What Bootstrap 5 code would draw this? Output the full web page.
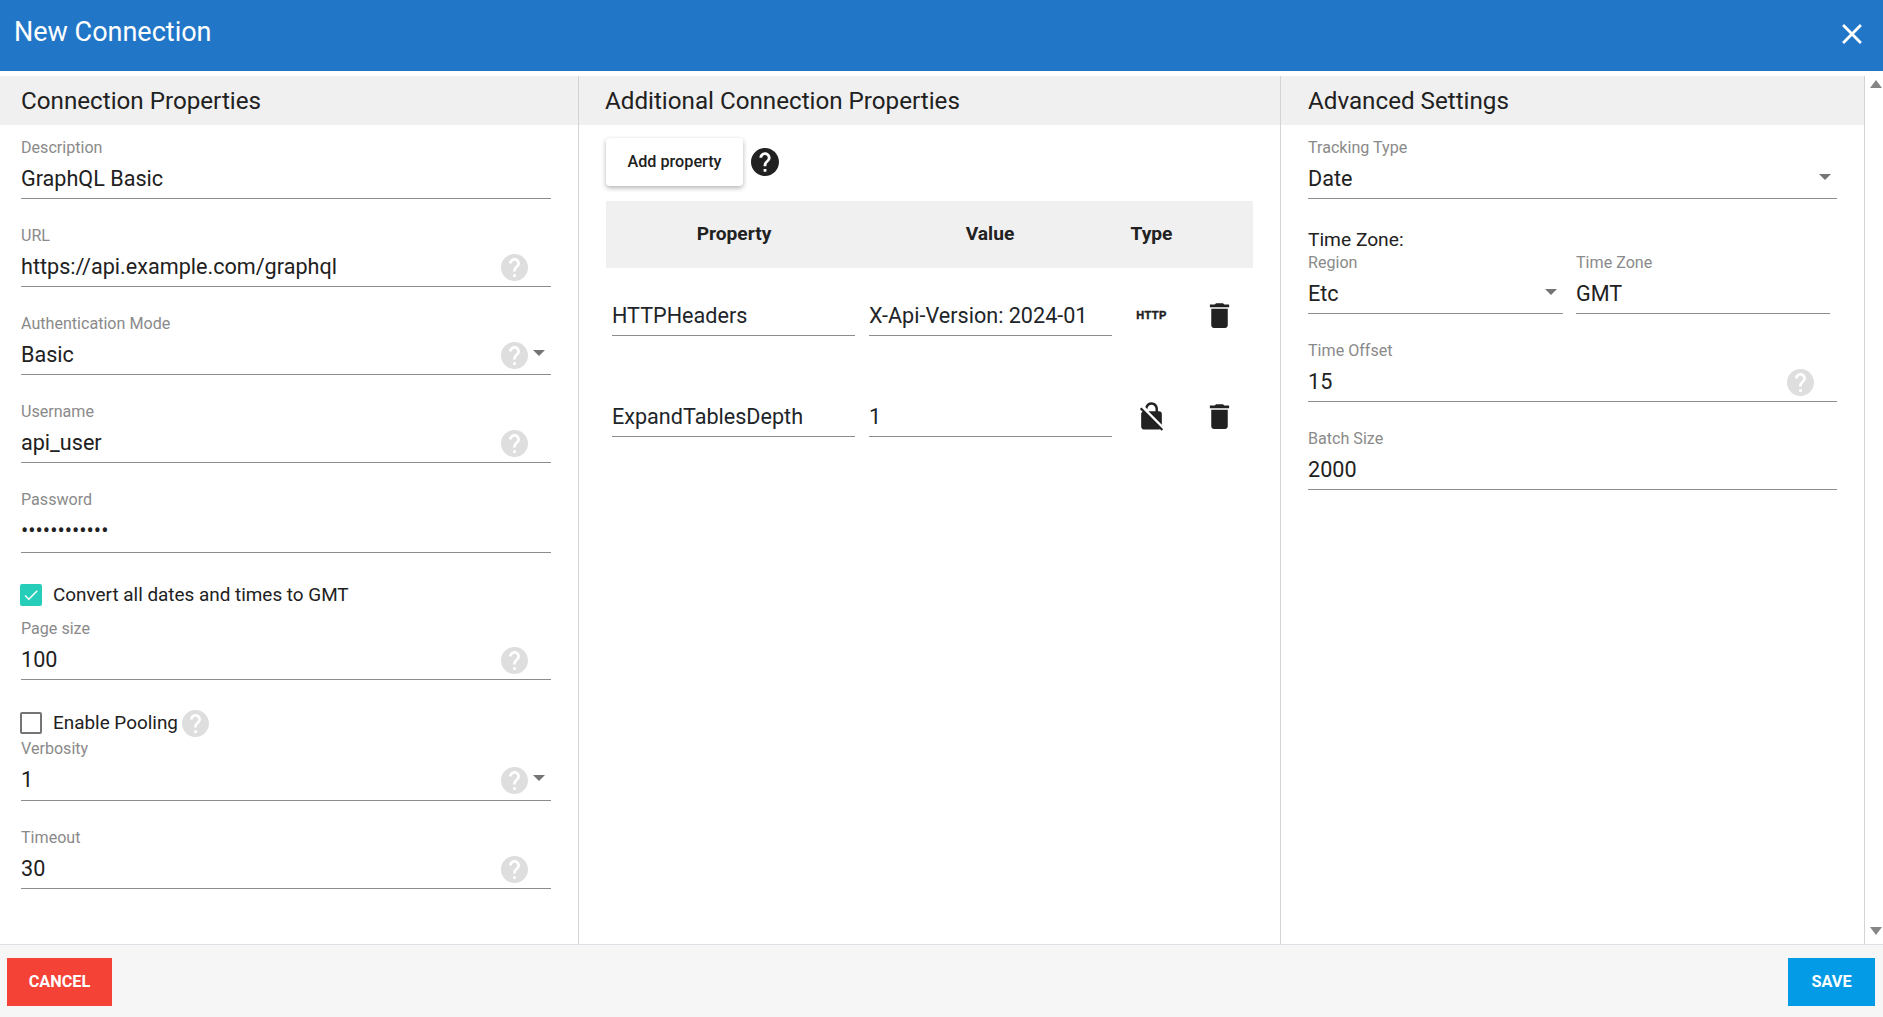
<!DOCTYPE html>
<html lang="en">
<head>
<meta charset="utf-8">
<title>New Connection</title>
<link href="https://cdn.jsdelivr.net/npm/bootstrap@5.3.0/dist/css/bootstrap.min.css" rel="stylesheet">
<style>
html,body{height:100%;overflow:hidden}
body{font-family:Roboto,"Liberation Sans",sans-serif;color:#212121;background:#fff}
.dlg{height:100vh}
.dlg-head{height:71px;background:#2176c8;color:#fff;padding:0 14px;flex:none}
.dlg-title{font-size:27px;font-weight:400;line-height:65px;margin:0}
.dlg-x{width:34px;height:34px;margin-top:17px;background:none;border:0;padding:0}
.dlg-gap{height:5px;flex:none}
.dlg-main{flex:1 1 0;min-height:0}
.pane{flex:none;border-right:1px solid #d4d4d4}
.pane-a{width:579px}
.pane-b{width:702px}
.pane-c{width:584px}
.pane-head{height:49px;background:#f0f0f0;line-height:51px;font-size:24.2px;padding-left:21px;margin:0;font-weight:400}
.pane-b .pane-head{padding-left:26px}
.pane-c .pane-head{padding-left:27px}
.pane-body{padding:13px 27px 0 21px}
.pane-b .pane-body{padding:13px 27px 0 27px}
.pane-c .pane-body{padding:13px 27px 0 27px}
.fld{margin-bottom:27px;position:relative}
.fld-pass{margin-bottom:26px}
.fld-lbl{font-size:16.1px;line-height:20px;margin-bottom:1px;color:#8a8a8a}
.fld-val{font-size:21.6px;line-height:40px;height:40px;border-bottom:1px solid #8c8c8c;white-space:nowrap}
.fld-val-42{height:42px}
.fld-val-41{height:41px}
.fld-help{position:absolute;right:23px;top:28px}
.fld-caret{position:absolute;right:6px;top:36px;width:0;height:0;border-left:6px solid transparent;border-right:6px solid transparent;border-top:6px solid #757575}
.ic-help{display:block;width:27px;height:27px;fill:#dedede}
.chk-row{height:32px;font-size:18.9px}
.chk-box{width:22px;height:22px;border:2px solid #757575;border-radius:2px;flex:none;margin:0 11px 0 -1px;background:#fff}
.chk-on{background:#26cdb9;border-color:#26cdb9;display:flex;align-items:center;justify-content:center}
.chk-help{margin-left:4px}
.tz-lbl{font-size:19.2px;line-height:27px}
.tz-a{width:255px;margin-right:13px}
.tz-b{width:254px}
.add-btn{height:48px;width:137px;padding:0;border:0;border-radius:4px;background:#fff;font-size:16.2px;font-weight:500;color:#212121;box-shadow:0 2px 5px rgba(0,0,0,.3)}
.add-help{width:28px;height:28px;fill:#212121;display:block;margin-left:8px}
.prop-tbl{table-layout:fixed;width:647px;margin:15px 0 0 0;--bs-table-bg:transparent}
.prop-tbl th{height:67px;background:#f0f0f0;text-align:center;vertical-align:middle;font-size:19.2px;font-weight:700;padding:0 0 0 1px;color:#212121}
.prop-tbl td{height:101px;padding:28px 6px 0 6px;vertical-align:top}
.prop-tbl td.cv{padding-left:8px}
.prop-tbl td.ci{padding:27px 0 0 1px;text-align:center}
.ci-box{height:40px}
.http-tag{font-family:"Liberation Sans",sans-serif;font-weight:700;font-size:11px;letter-spacing:.5px;color:#212121;-webkit-text-stroke:.4px #212121}
.ic-dark{fill:#212121;display:block}
.ic-del{width:33px;height:33px}
.ic-nolock{width:31px;height:31px}
.scroll-col{flex:1 1 0;background:#fff}
.arr-up,.arr-dn{width:0;height:0;border-left:6px solid transparent;border-right:6px solid transparent;margin:0 1px 0 auto}
.arr-up{border-bottom:8px solid #868686;margin-top:4px}
.arr-dn{border-top:8px solid #868686;margin-bottom:9px}
.dlg-foot{height:73px;flex:none;background:#f6f6f6;border-top:1px solid #dfdfe6;padding:13px 8px 0 7px}
.act-btn{height:48px;border:0;border-radius:0;color:#fff;font-size:16.3px;font-weight:700;padding:0}
.act-cancel{width:105px;background:#f44336}
.act-save{width:87px;background:#039be5}
</style>
</head>
<body>
<svg width="0" height="0" class="d-none" aria-hidden="true">
<symbol id="s-help" viewBox="2 2 20 20"><path d="M12 2C6.48 2 2 6.48 2 12s4.48 10 10 10 10-4.48 10-10S17.52 2 12 2zm1 17h-2v-2h2v2zm2.07-7.75l-.9.92C13.45 12.9 13 13.5 13 15h-2v-.5c0-1.1.45-2.1 1.17-2.83l1.24-1.26c.37-.36.59-.86.59-1.41 0-1.1-.9-2-2-2s-2 .9-2 2H8c0-2.21 1.79-4 4-4s4 1.79 4 4c0 .88-.36 1.68-.93 2.25z"/></symbol>
<symbol id="s-del" viewBox="0 0 24 24"><path d="M6 19c0 1.1.9 2 2 2h8c1.1 0 2-.9 2-2V7H6v12zM19 4h-3.5l-1-1h-5l-1 1H5v2h14V4z"/></symbol>
<symbol id="s-nolock" viewBox="0 0 24 24"><path d="M21 21.78L4.22 5 3 6.22l2.04 2.04C4.42 8.6 4 9.25 4 10v10c0 1.1.9 2 2 2h12c.23 0 .45-.05.66-.12L19.78 23 21 21.78zM8.9 6c0-1.71 1.39-3.1 3.1-3.1s3.1 1.39 3.1 3.1v2H9.66L20 18.34V10c0-1.1-.9-2-2-2h-1V6c0-2.76-2.24-5-5-5-2.32 0-4.26 1.59-4.82 3.74L8.9 6.46V6z"/></symbol>
</svg>
<div class="dlg d-flex flex-column">
  <div class="dlg-head d-flex justify-content-between">
    <h1 class="dlg-title">New Connection</h1>
    <button class="dlg-x" type="button" aria-label="Close"><svg viewBox="0 0 24 24" width="34" height="34"><path d="M19 6.41L17.59 5 12 10.59 6.41 5 5 6.41 10.59 12 5 17.59 6.41 19 12 13.41 17.59 19 19 17.59 13.41 12z" fill="#fff"/></svg></button>
  </div>
  <div class="dlg-gap"></div>
  <div class="dlg-main d-flex">
    <section class="pane pane-a">
      <h2 class="pane-head">Connection Properties</h2>
      <div class="pane-body">
        <div class="fld"><div class="fld-lbl">Description</div><div class="fld-val">GraphQL Basic</div></div>
        <div class="fld"><div class="fld-lbl">URL</div><div class="fld-val">https://api.example.com/graphql</div><svg class="ic-help fld-help"><use href="#s-help"/></svg></div>
        <div class="fld"><div class="fld-lbl">Authentication Mode</div><div class="fld-val">Basic</div><svg class="ic-help fld-help"><use href="#s-help"/></svg><span class="fld-caret"></span></div>
        <div class="fld"><div class="fld-lbl">Username</div><div class="fld-val">api_user</div><svg class="ic-help fld-help"><use href="#s-help"/></svg></div>
        <div class="fld fld-pass"><div class="fld-lbl">Password</div><div class="fld-val fld-val-42">••••••••••••</div></div>
        <div class="chk-row d-flex align-items-center mb-2"><span class="chk-box chk-on"><svg viewBox="0 0 24 24" width="20" height="20"><path d="M9 16.2L4.8 12l-1.4 1.4L9 19 21 7l-1.4-1.4z" fill="#fff"/></svg></span>Convert all dates and times to GMT</div>
        <div class="fld"><div class="fld-lbl">Page size</div><div class="fld-val">100</div><svg class="ic-help fld-help"><use href="#s-help"/></svg></div>
        <div class="chk-row d-flex align-items-center"><span class="chk-box"></span>Enable Pooling<svg class="ic-help chk-help"><use href="#s-help"/></svg></div>
        <div class="fld"><div class="fld-lbl">Verbosity</div><div class="fld-val fld-val-41">1</div><svg class="ic-help fld-help"><use href="#s-help"/></svg><span class="fld-caret"></span></div>
        <div class="fld"><div class="fld-lbl">Timeout</div><div class="fld-val">30</div><svg class="ic-help fld-help"><use href="#s-help"/></svg></div>
      </div>
    </section>
    <section class="pane pane-b">
      <h2 class="pane-head">Additional Connection Properties</h2>
      <div class="pane-body">
        <div class="d-flex align-items-center">
          <button class="add-btn" type="button">Add property</button>
          <svg class="add-help"><use href="#s-help"/></svg>
        </div>
        <table class="table table-borderless prop-tbl">
          <colgroup><col style="width:255px"><col style="width:257px"><col style="width:66px"><col style="width:69px"></colgroup>
          <thead><tr><th>Property</th><th>Value</th><th>Type</th><th></th></tr></thead>
          <tbody>
            <tr>
              <td><div class="fld-val">HTTPHeaders</div></td>
              <td class="cv"><div class="fld-val">X-Api-Version: 2024-01</div></td>
              <td class="ci"><div class="ci-box d-flex align-items-center justify-content-center"><span class="http-tag">HTTP</span></div></td>
              <td class="ci"><div class="ci-box d-flex align-items-center justify-content-center"><svg class="ic-dark ic-del"><use href="#s-del"/></svg></div></td>
            </tr>
            <tr>
              <td><div class="fld-val">ExpandTablesDepth</div></td>
              <td class="cv"><div class="fld-val">1</div></td>
              <td class="ci"><div class="ci-box d-flex align-items-center justify-content-center"><svg class="ic-dark ic-nolock"><use href="#s-nolock"/></svg></div></td>
              <td class="ci"><div class="ci-box d-flex align-items-center justify-content-center"><svg class="ic-dark ic-del"><use href="#s-del"/></svg></div></td>
            </tr>
          </tbody>
        </table>
      </div>
    </section>
    <section class="pane pane-c">
      <h2 class="pane-head">Advanced Settings</h2>
      <div class="pane-body">
        <div class="fld"><div class="fld-lbl">Tracking Type</div><div class="fld-val">Date</div><span class="fld-caret"></span></div>
        <div class="tz-lbl">Time Zone:</div>
        <div class="d-flex">
          <div class="fld tz-a"><div class="fld-lbl">Region</div><div class="fld-val">Etc</div><span class="fld-caret"></span></div>
          <div class="fld tz-b"><div class="fld-lbl">Time Zone</div><div class="fld-val">GMT</div></div>
        </div>
        <div class="fld"><div class="fld-lbl">Time Offset</div><div class="fld-val">15</div><svg class="ic-help fld-help"><use href="#s-help"/></svg></div>
        <div class="fld"><div class="fld-lbl">Batch Size</div><div class="fld-val">2000</div></div>
      </div>
    </section>
    <div class="scroll-col d-flex flex-column justify-content-between">
      <div class="arr-up"></div>
      <div class="arr-dn"></div>
    </div>
  </div>
  <div class="dlg-foot d-flex justify-content-between align-items-start">
    <button class="act-btn act-cancel" type="button">CANCEL</button>
    <button class="act-btn act-save" type="button">SAVE</button>
  </div>
</div>
<script src="https://cdn.jsdelivr.net/npm/bootstrap@5.3.0/dist/js/bootstrap.bundle.min.js"></script>
</body>
</html>
